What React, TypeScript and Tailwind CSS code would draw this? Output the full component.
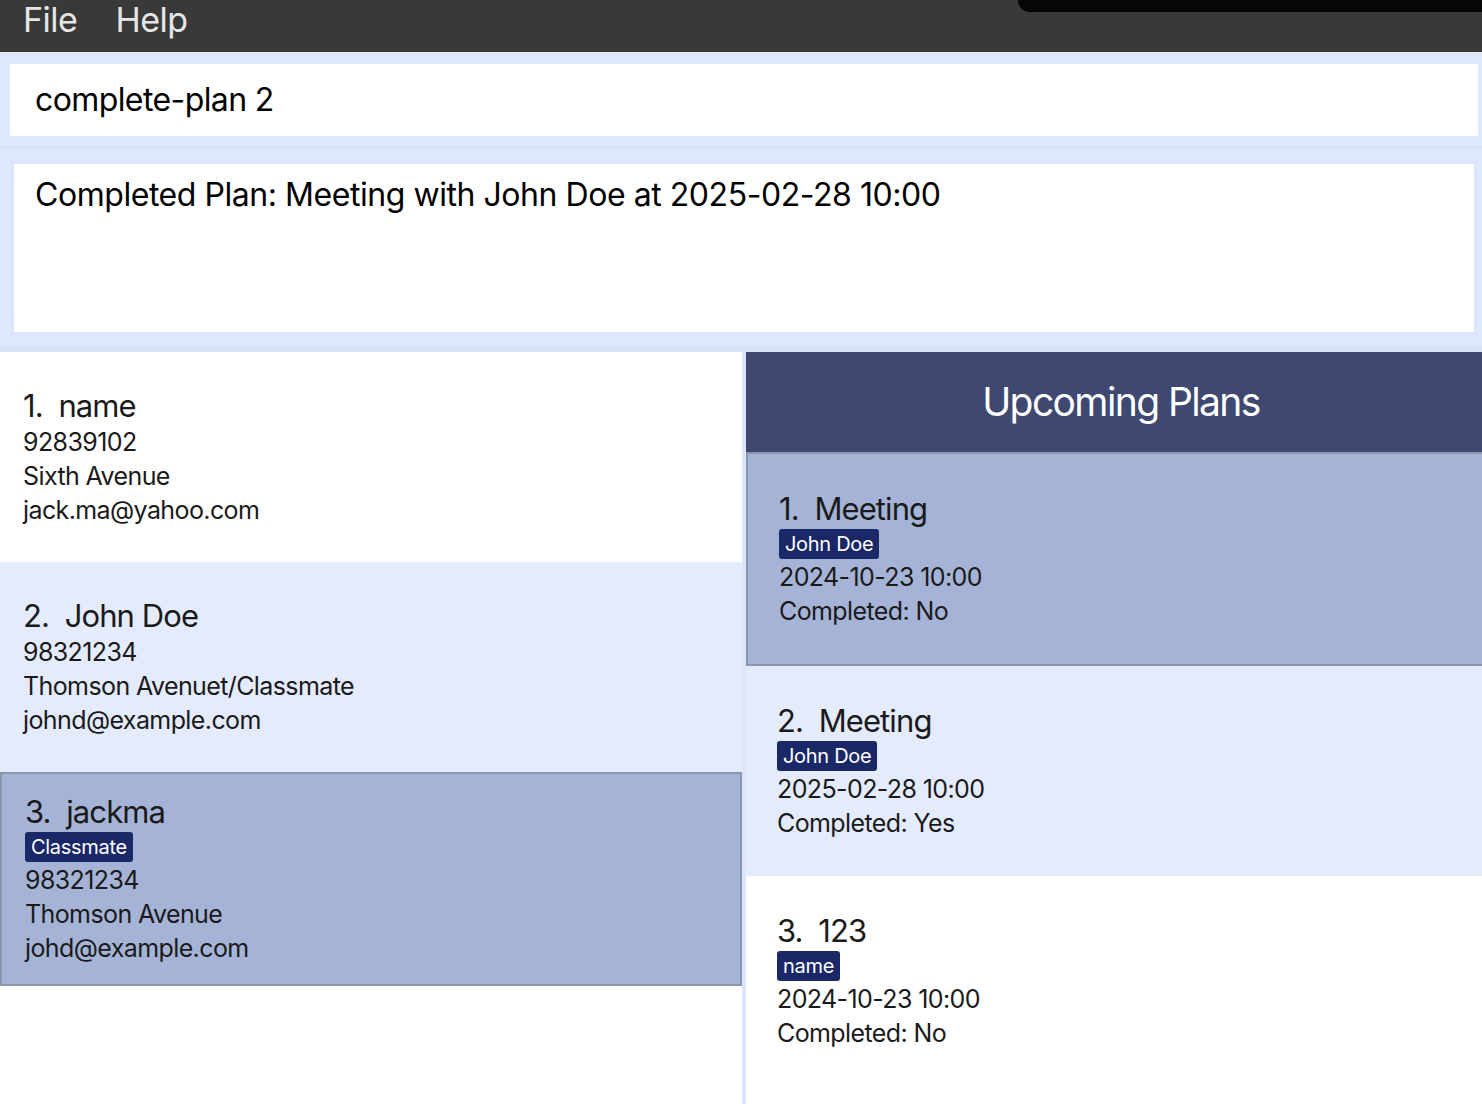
import React from 'react'

type Person = { name: string; tags: string[]; phone: string; address: string; email: string; selected?: boolean; alt?: boolean }
type Plan = { title: string; tag: string; date: string; done: string; selected?: boolean; alt?: boolean }

const people: Person[] = [
    { name: 'name', tags: [], phone: '92839102', address: 'Sixth Avenue', email: 'jack.ma@yahoo.com' },
    { name: 'John Doe', tags: [], phone: '98321234', address: 'Thomson Avenuet/Classmate', email: 'johnd@example.com', alt: true },
    { name: 'jackma', tags: ['Classmate'], phone: '98321234', address: 'Thomson Avenue', email: 'johd@example.com', selected: true },
]

const plans: Plan[] = [
    { title: 'Meeting', tag: 'John Doe', date: '2024-10-23 10:00', done: 'Completed: No', selected: true },
    { title: 'Meeting', tag: 'John Doe', date: '2025-02-28 10:00', done: 'Completed: Yes', alt: true },
    { title: '123', tag: 'name', date: '2024-10-23 10:00', done: 'Completed: No' },
]

function Tag({ label }: { label: string }) {
    return (
        <div className="flex">
            <span className="my-[1px] h-[30px] px-[6px] rounded-[3px] bg-[#1b2868] text-white text-[20px] leading-[30px] tracking-[-0.3px]">
                {label}
            </span>
        </div>
    )
}

function Card({ index, title, children, selected, alt, pad }: { index: number; title: string; children: React.ReactNode; selected?: boolean; alt?: boolean; pad: string }) {
    const bg = selected ? 'bg-[#a5b4d6] border-2 border-[#8b95ab] h-[214px]' : alt ? 'bg-[#e4ebfd] h-[210px]' : 'bg-white h-[210px]'
    return (
        <div className={`${bg} ${pad} flex flex-col justify-center shrink-0 text-[#1a1a1a]`}>
            <div className="text-[31px] leading-[38px] whitespace-pre tracking-[-0.9px]">{`${index}.  ${title}`}</div>
            {children}
        </div>
    )
}

function Line({ text }: { text: string }) {
    return <div className="text-[25px] leading-[34px] tracking-[-0.6px]">{text}</div>
}

export default function App() {
    return (
        <div className="w-[1482px] h-[1104px] overflow-hidden bg-[#e0e9fb]" style={{ fontFamily: 'Inter, "Noto Sans", sans-serif' }}>
            <div className="relative h-[52px] bg-[#393939] flex gap-[38px] pl-[23px] pt-[3px] text-[34px] leading-[34px] text-[#e6e6e6] tracking-[-0.5px]">
                <span>File</span>
                <span>Help</span>
                <div className="absolute right-0 top-0 w-[464px] h-[12px] bg-[#060606] rounded-bl-[14px]" />
            </div>

            <div className="pl-[10px] pr-[4px] pt-[12px] pb-[10px] border-b-[3px] border-[#d8e3f9]">
                <div className="h-[72px] bg-white flex items-center pl-[25px] text-[32px] text-black tracking-[-0.6px]">
                    complete-plan 2
                </div>
            </div>

            <div className="pl-[10px] pr-[4px] pt-[11px] pb-[10px] border-b-[6px] border-[#d8e3f9]">
                <div className="h-[176px] bg-white border-4 border-[#dbe5fb] pl-[21px] pt-[11px] text-[32px] leading-[40px] text-black tracking-[-0.45px]">
                    Completed Plan: Meeting with John Doe at 2025-02-28 10:00
                </div>
            </div>

            <div className="flex h-[752px]">
                <div className="w-[742px] shrink-0 bg-white flex flex-col">
                    {people.map((p, i) => (
                        <Card key={i} index={i + 1} title={p.name} selected={p.selected} alt={p.alt} pad="px-[23px]">
                            {p.tags.map((t) => (
                                <Tag key={t} label={t} />
                            ))}
                            <Line text={p.phone} />
                            <Line text={p.address} />
                            <Line text={p.email} />
                        </Card>
                    ))}
                </div>
                <div className="w-[4px] shrink-0 bg-[#dce6fb]" />
                <div className="w-[750px] shrink-0 bg-white flex flex-col">
                    <div className="h-[100px] bg-[#3e4870] flex items-center justify-center text-white text-[39px] tracking-[-1.6px] shrink-0">
                        Upcoming Plans
                    </div>
                    {plans.map((p, i) => (
                        <Card key={i} index={i + 1} title={p.title} selected={p.selected} alt={p.alt} pad="px-[31px]">
                            <Tag label={p.tag} />
                            <Line text={p.date} />
                            <Line text={p.done} />
                        </Card>
                    ))}
                </div>
            </div>
        </div>
    )
}
